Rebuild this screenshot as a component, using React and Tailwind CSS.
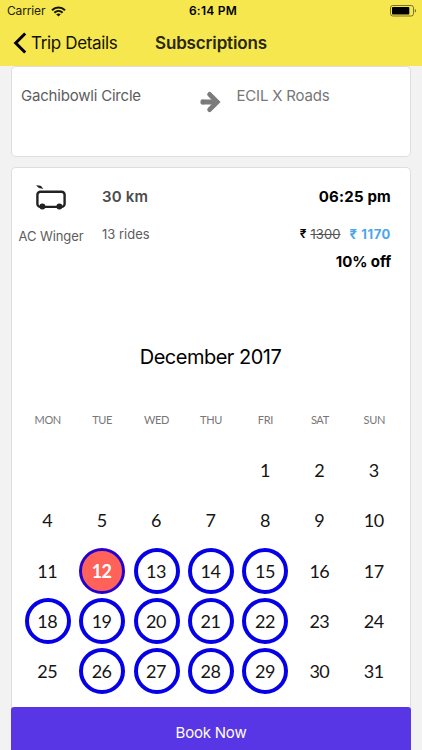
import React from "react";

const WEEKDAYS = ["MON", "TUE", "WED", "THU", "FRI", "SAT", "SUN"];
const BOOKED = [13, 14, 15, 18, 19, 20, 21, 22, 26, 27, 28, 29];
const SELECTED = 12;
const CELLS = [null, null, null, null, ...Array.from({ length: 31 }, (_, i) => i + 1)];

function WifiIcon() {
  return (
    <svg className="ml-[6px] h-[11px] w-[15px]" viewBox="0 0 15 11" fill="none" stroke="#111100" strokeWidth="2">
      <path d="M1 4.2C4.7.6 10.3.6 14 4.2" />
      <path d="M3.4 6.7c2.4-2.2 5.8-2.2 8.2 0" />
      <path d="M7.5 10.6 5.2 8.3c1.3-1.2 3.3-1.2 4.6 0z" fill="#111100" stroke="none" />
    </svg>
  );
}

function BatteryIcon() {
  return (
    <svg className="h-[12px] w-[27px]" viewBox="0 0 27 12" fill="none">
      <rect x="0.5" y="0.5" width="23" height="10.5" rx="2.3" stroke="#77722c" />
      <rect x="2" y="2" width="17.3" height="7.5" rx="0.8" fill="#000" />
      <path d="M24.8 4v3.6c.9-.3 1.3-1 1.3-1.8s-.4-1.5-1.3-1.8z" fill="#77722c" />
    </svg>
  );
}

function ArrowIcon() {
  return (
    <svg className="h-[22px] w-[21px]" viewBox="0 0 21 22" fill="none" stroke="#7b7b7b" strokeWidth="4.8">
      <path d="M2.9 11H15.5" strokeLinecap="round" />
      <path d="M9.6 3.4 17.2 11l-7.6 7.6" strokeLinecap="round" />
      <path d="M1.2 9h3v4h-3z" fill="#7b7b7b" strokeWidth="0.8" strokeLinejoin="round" />
    </svg>
  );
}

function BusIcon() {
  return (
    <svg className="h-[26px] w-[32px]" viewBox="0 0 32 26" fill="none">
      <path d="M1.6 1.6 5.8 2.1 7.8 4.6 3.8 3.7z" fill="#222" stroke="#222" strokeWidth="0.5" />
      <rect x="2.4" y="7.7" width="27.2" height="15.2" rx="3" stroke="#222" strokeWidth="2.4" />
      <circle cx="7.4" cy="22.4" r="3" fill="#222" />
      <circle cx="24.4" cy="22.4" r="3" fill="#222" />
    </svg>
  );
}

function Day({ day }) {
  if (day === null) return <div className="h-[50.3px]" />;
  let ring = "border-transparent text-[#151515]";
  if (day === SELECTED) ring = "border-[#2500cf] bg-[#ff6258] font-bold text-white";
  else if (BOOKED.includes(day)) ring = "border-[#0500e6] text-[#151515]";
  return (
    <div className="flex h-[50.3px] items-center justify-center">
      <div
        className={`flex h-[46px] w-[46px] items-center justify-center rounded-full pr-px text-[18px] leading-[20px] tracking-[-0.5px] ${
          day === SELECTED ? "border-[3px]" : "border-4"
        } ${ring}`}
      >
        {day}
      </div>
    </div>
  );
}

export default function App() {
  return (
    <div className="flex h-[750px] w-[422px] flex-col overflow-hidden bg-[#f2f2f2] font-['Inter',sans-serif] text-black">
      <header className="h-[66px] shrink-0 bg-[#f6e74e]">
        <div className="grid h-[22px] grid-cols-3 items-center">
          <div className="flex items-center pl-[7px] text-[12px] tracking-[-0.15px] text-[#222208]">
            Carrier
            <WifiIcon />
          </div>
          <div className="pl-[4px] text-center text-[12px] font-semibold tracking-[0.25px]">6:14 PM</div>
          <div className="flex justify-end pr-[5px]">
            <BatteryIcon />
          </div>
        </div>
        <div className="flex h-[42px] items-center">
          <svg className="ml-[13px] h-[22px] w-[14px]" viewBox="0 0 14 22" fill="none" stroke="#000" strokeWidth="3">
            <path d="M12.2 1.5 2.7 11l9.5 9.5" />
          </svg>
          <span className="ml-[4px] w-[124px] whitespace-nowrap text-[17px] leading-[24px] tracking-[-0.35px] text-[#111100]">Trip Details</span>
          <span className="whitespace-nowrap text-[17px] font-semibold leading-[24px] tracking-[-0.15px] text-[#29270d]">Subscriptions</span>
        </div>
      </header>

      <section className="mx-[11px] flex h-[91px] shrink-0 rounded-[5px] border border-[#dedede] bg-white text-[15px] leading-[20px]">
        <div className="w-[188px] pl-[9px] pt-[19px] tracking-[-0.2px] text-[#5d5d5d]">Gachibowli Circle</div>
        <div className="w-[37px] pt-[24px]">
          <ArrowIcon />
        </div>
        <div className="-ml-[0.5px] pt-[19px] tracking-[-0.2px] text-[#777]">ECIL X Roads</div>
      </section>

      <section className="mx-[11px] mt-[10px] flex min-h-0 flex-1 flex-col rounded-t-[5px] border border-b-0 border-[#dedede] bg-white">
        <div className="flex h-[164px] shrink-0">
          <div className="flex w-[78px] flex-col items-center pt-[16px]">
            <BusIcon />
            <span className="mt-[18px] whitespace-nowrap text-[13px] leading-[16px] tracking-[-0.1px] text-[#5d5d5d]">AC Winger</span>
          </div>
          <div className="flex w-[120px] flex-col pl-[12px] pt-[19px]">
            <span className="text-[15px] font-semibold leading-[20px] tracking-[0.2px] text-[#4c4c4c]">30 km</span>
            <span className="mt-[19px] text-[13px] leading-[16px] text-[#5d5d5d]">13 rides</span>
          </div>
          <div className="flex flex-1 flex-col items-end pr-[19px] pt-[19px]">
            <span className="text-[15px] font-bold leading-[20px] tracking-[0.2px]">06:25 pm</span>
            <div className="mt-[19px] flex text-[13px] leading-[16px]">
              <span className="text-[12px] font-semibold">₹</span>
              <span className="ml-[4px] tracking-[0.1px] text-[#555] line-through">1300</span>
              <span className="ml-[9px] font-bold tracking-[0.6px] text-[#4ba6ea]">₹ 1170</span>
            </div>
            <span className="mt-[10px] text-[15px] font-bold leading-[20px] tracking-[-0.1px]">10% off</span>
          </div>
        </div>

        <h2 className="mt-[12px] shrink-0 pr-px text-center text-[20px] leading-[26px] tracking-[-0.5px]">December 2017</h2>

        <div className="mx-[8.5px] mt-[42px] grid shrink-0 grid-cols-7 text-center font-['Lato',sans-serif] text-[11px] leading-[16px] tracking-[-0.35px] text-[#777]">
          {WEEKDAYS.map((name) => (
            <span key={name}>{name}</span>
          ))}
        </div>
        <div className="mx-[8.5px] mt-[17px] grid h-[251.5px] shrink-0 grid-cols-7 font-['Lato',sans-serif]">
          {CELLS.map((day, i) => (
            <Day key={i} day={day} />
          ))}
        </div>

        <button className="-mx-px mt-auto flex h-[43px] shrink-0 items-center justify-center rounded-t-[3px] bg-[#5936e5] pt-[9px] text-[15px] tracking-[-0.2px] text-white">
          Book Now
        </button>
      </section>
    </div>
  );
}
